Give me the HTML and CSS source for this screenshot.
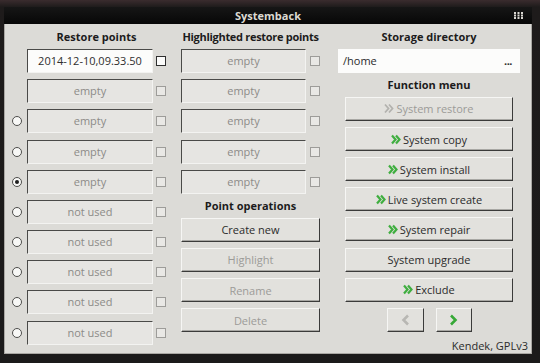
FILE: index.html
```html
<!DOCTYPE html>
<html lang="en">
<head>
  <meta charset="UTF-8">
  <title>Systemback</title>
  <link rel="stylesheet" href="styles.css">
</head>
<body>
  <div class="window">
    <div class="titlebar">
      <span class="title">Systemback</span>
      <svg class="grip" width="9" height="7" viewBox="0 0 9 7">
        <g fill="#d8d6d0">
          <rect x="0" y="0" width="2" height="2"/><rect x="3.5" y="0" width="2" height="2"/><rect x="7" y="0" width="2" height="2"/>
          <rect x="0" y="2.5" width="2" height="2"/><rect x="3.5" y="2.5" width="2" height="2"/><rect x="7" y="2.5" width="2" height="2"/>
          <rect x="0" y="5" width="2" height="2"/><rect x="3.5" y="5" width="2" height="2"/><rect x="7" y="5" width="2" height="2"/>
        </g>
      </svg>
    </div>
    <div class="main">
      <!-- restore points -->
      <div class="col col-restore">
        <div class="heading">Restore points</div>
        <div class="row"><span class="radio hidden"></span><div class="field active">2014-12-10,09.33.50</div><span class="check on"></span></div>
        <div class="row"><span class="radio hidden"></span><div class="field">empty</div><span class="check"></span></div>
        <div class="row"><span class="radio"></span><div class="field">empty</div><span class="check"></span></div>
        <div class="row"><span class="radio"></span><div class="field">empty</div><span class="check"></span></div>
        <div class="row"><span class="radio checked"></span><div class="field">empty</div><span class="check"></span></div>
        <div class="row"><span class="radio"></span><div class="field">not used</div><span class="check"></span></div>
        <div class="row"><span class="radio"></span><div class="field">not used</div><span class="check"></span></div>
        <div class="row"><span class="radio"></span><div class="field">not used</div><span class="check"></span></div>
        <div class="row"><span class="radio"></span><div class="field">not used</div><span class="check"></span></div>
        <div class="row"><span class="radio"></span><div class="field">not used</div><span class="check"></span></div>
      </div>

      <!-- highlighted points -->
      <div class="col col-highlight">
        <div class="heading tight">Highlighted restore points</div>
        <div class="row"><div class="field">empty</div><span class="check"></span></div>
        <div class="row"><div class="field">empty</div><span class="check"></span></div>
        <div class="row"><div class="field">empty</div><span class="check"></span></div>
        <div class="row"><div class="field">empty</div><span class="check"></span></div>
        <div class="row"><div class="field">empty</div><span class="check"></span></div>
        <div class="heading">Point operations</div>
        <button class="btn">Create new</button>
        <button class="btn disabled">Highlight</button>
        <button class="btn disabled">Rename</button>
        <button class="btn disabled">Delete</button>
      </div>

      <!-- storage / functions -->
      <div class="col col-menu">
        <div class="heading">Storage directory</div>
        <div class="field storage"><span>/home</span><span class="dots">...</span></div>
        <div class="heading">Function menu</div>
        <button class="btn menu disabled"><svg class="chev" width="10" height="11" viewBox="0 0 10 11"><path d="M1 1.5 4.5 5.5 1 9.5M5 1.5 8.5 5.5 5 9.5" fill="none" stroke="#b3b2ae" stroke-width="1.8"/></svg>System restore</button>
        <button class="btn menu"><svg class="chev" width="10" height="11" viewBox="0 0 10 11"><path d="M1 1.5 4.5 5.5 1 9.5M5 1.5 8.5 5.5 5 9.5" fill="none" stroke="#3fae3f" stroke-width="2.2"/></svg>System copy</button>
        <button class="btn menu"><svg class="chev" width="10" height="11" viewBox="0 0 10 11"><path d="M1 1.5 4.5 5.5 1 9.5M5 1.5 8.5 5.5 5 9.5" fill="none" stroke="#3fae3f" stroke-width="2.2"/></svg>System install</button>
        <button class="btn menu"><svg class="chev" width="10" height="11" viewBox="0 0 10 11"><path d="M1 1.5 4.5 5.5 1 9.5M5 1.5 8.5 5.5 5 9.5" fill="none" stroke="#3fae3f" stroke-width="2.2"/></svg>Live system create</button>
        <button class="btn menu"><svg class="chev" width="10" height="11" viewBox="0 0 10 11"><path d="M1 1.5 4.5 5.5 1 9.5M5 1.5 8.5 5.5 5 9.5" fill="none" stroke="#3fae3f" stroke-width="2.2"/></svg>System repair</button>
        <button class="btn menu">System upgrade</button>
        <button class="btn menu"><svg class="chev" width="10" height="11" viewBox="0 0 10 11"><path d="M1 1.5 4.5 5.5 1 9.5M5 1.5 8.5 5.5 5 9.5" fill="none" stroke="#3fae3f" stroke-width="2.2"/></svg>Exclude</button>
        <div class="nav">
          <button class="btn nav-btn prev"><svg width="9" height="12" viewBox="0 0 9 12"><path d="M7 1.5 2.5 6 7 10.5" fill="none" stroke="#b8b7b3" stroke-width="2.6"/></svg></button>
          <button class="btn nav-btn next"><svg width="9" height="12" viewBox="0 0 9 12"><path d="M2 1.5 6.5 6 2 10.5" fill="none" stroke="#36a836" stroke-width="2.6"/></svg></button>
        </div>
        <div class="footer">Kendek, GPLv3</div>
      </div>
    </div>
  </div>
</body>
</html>
```

FILE: styles.css
```css
html, body {
  margin: 0;
}
body {
  width: 540px;
  height: 363px;
  overflow: hidden;
  background: linear-gradient(to bottom, #3a2c2e 0, #1e1b1b 7px, #1b1a1a 100%);
  font-family: "Open Sans", "DejaVu Sans", sans-serif;
  font-size: 11px;
  color: #2b2b2b;
}
.window {
  margin: 7px 0 0 4px;
  width: 528px;
}
.titlebar {
  height: 17px;
  background: linear-gradient(to bottom, #161616, #070707);
  display: flex;
  align-items: center;
}
.title {
  flex: 1;
  text-align: center;
  padding-left: 18px;
  font-weight: bold;
  color: #dcd9d2;
}
.grip {
  margin-right: 9px;
}
.main {
  height: 330px;
  box-sizing: border-box;
  background: #dcdbd7;
  border: 1px solid #a9a7a3;
  border-top: none;
  display: flex;
  padding: 7.2px 0 0 7px;
}
.col {
  display: flex;
  flex-direction: column;
  gap: 6.2px;
}
.heading {
  height: 11.6px;
  line-height: 11.6px;
  font-weight: bold;
  color: #1c1c1c;
  white-space: nowrap;
  display: flex;
  justify-content: center;
}
.heading.tight {
  letter-spacing: -0.3px;
}
.row {
  display: flex;
  align-items: center;
  height: 24px;
}
.field {
  height: 24px;
  box-sizing: border-box;
  background: #e6e5e2;
  border: 1px solid;
  border-color: #4a4a48 #f3f3f1 #f3f3f1 #4a4a48;
  color: #8c8b88;
  text-align: center;
  line-height: 22px;
}
.field.active {
  background: #fcfcfb;
  color: #2e2e2e;
}
.check {
  width: 10px;
  height: 10px;
  box-sizing: border-box;
  border: 1px solid #9d9c99;
  background: #e9e8e5;
}
.check.on {
  border-color: #2e2e2e;
  background: #fbfbfa;
}
.radio {
  width: 10px;
  height: 10px;
  box-sizing: border-box;
  border: 1px solid #4d4d4b;
  border-radius: 50%;
  background: #f8f8f6;
  margin-right: 5px;
  display: flex;
  align-items: center;
  justify-content: center;
}
.radio.hidden {
  visibility: hidden;
}
.radio.checked::after {
  content: "";
  width: 4px;
  height: 4px;
  border-radius: 50%;
  background: #1e1e1e;
}

/* left column */
.col-restore {
  width: 154px;
}
.col-restore .heading {
  margin-left: 15px;
}
.col-restore .field {
  width: 126px;
}
.col-restore .check {
  margin-left: 3px;
}

/* middle column */
.col-highlight {
  width: 139px;
  margin-left: 15px;
}
.col-highlight .field {
  width: 125px;
}
.col-highlight .check {
  margin-left: 4px;
}

/* right column */
.col-menu {
  width: 182px;
  margin-left: 18px;
}
.storage {
  background: #fcfcfb;
  color: #2b2b2b;
  display: flex;
  justify-content: space-between;
  text-align: left;
  padding: 0 7px 0 4px;
  border-color: #fcfcfb;
}
.dots {
  font-weight: bold;
  letter-spacing: -0.5px;
}

.btn {
  height: 24px;
  box-sizing: border-box;
  margin: 0;
  padding: 0;
  font-family: inherit;
  font-size: 11px;
  color: #2b2b2b;
  background: #e2e1dd;
  border: 1px solid;
  border-color: #f6f6f4 #3b3b3a #3b3b3a #f6f6f4;
  box-shadow: inset 0 -1px #a8a7a3;
  display: flex;
  align-items: center;
  justify-content: center;
}
.btn.disabled {
  color: #9c9b98;
}
.col-highlight .btn {
  width: 139px;
}
.menu {
  width: 168px;
  margin: 0 7px;
}
.chev {
  margin-right: 2px;
}
.nav {
  display: flex;
  justify-content: center;
  gap: 12px;
}
.nav-btn {
  width: 37px;
}
.nav-btn.next {
  width: 36px;
}
.footer {
  height: 15px;
  line-height: 15px;
  text-align: right;
  margin-right: -8px;
  color: #2b2b2b;
}
```
